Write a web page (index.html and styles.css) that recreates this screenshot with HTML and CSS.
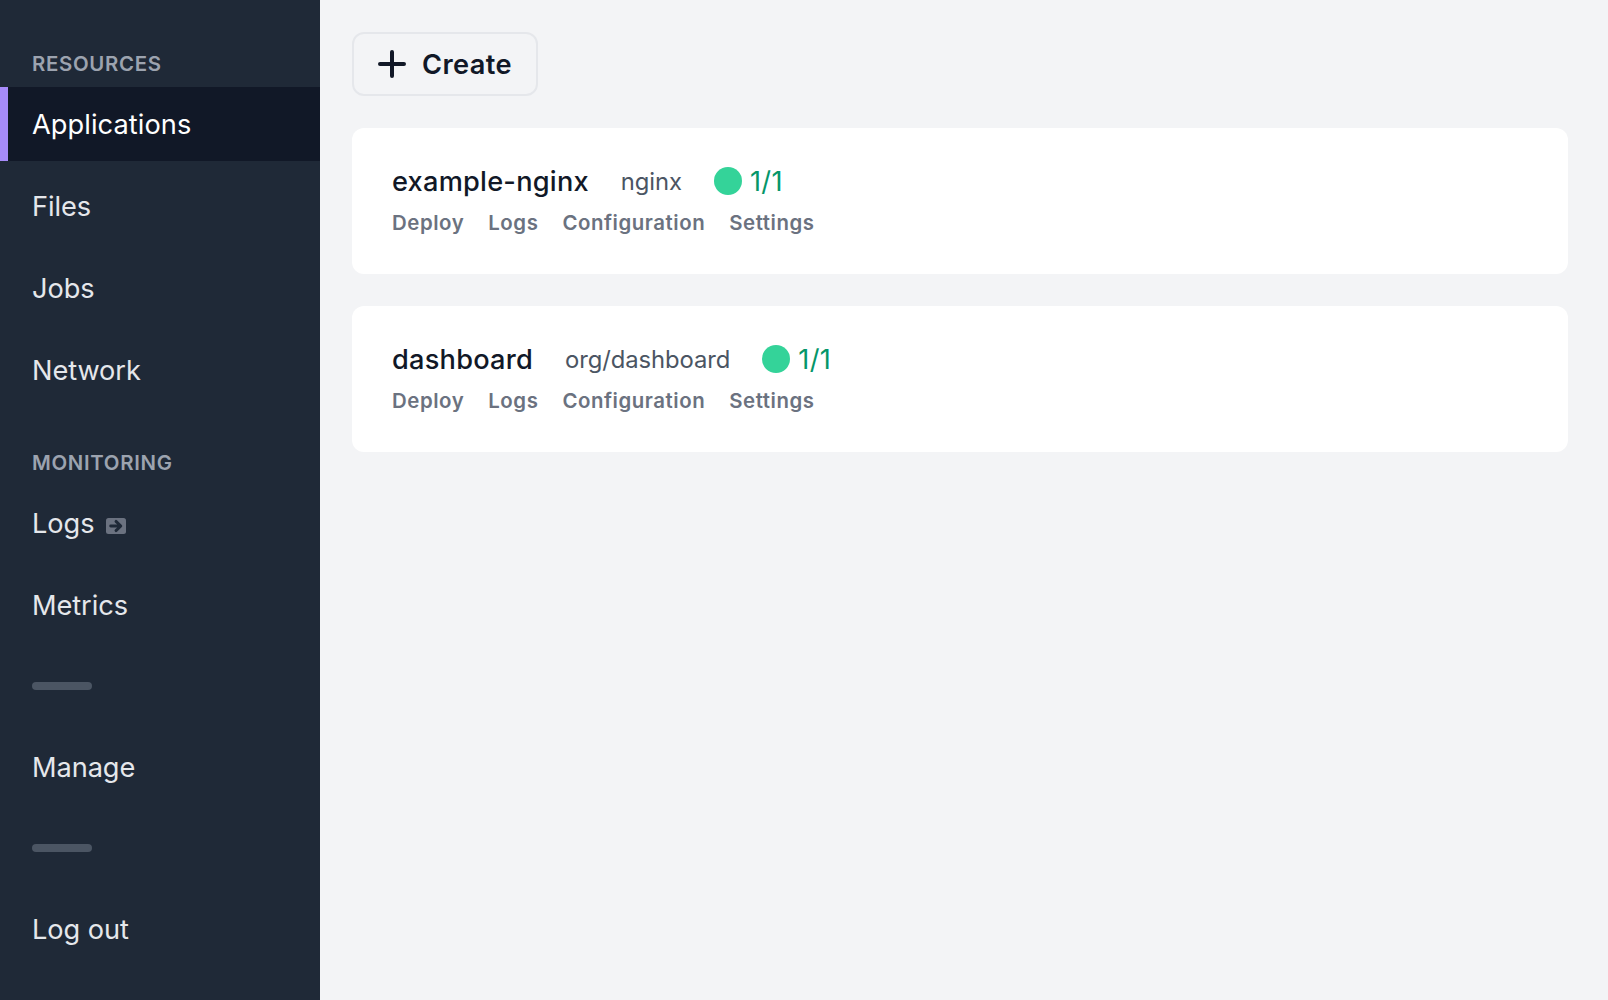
FILE: index.html
```html
<!DOCTYPE html>
<html lang="en">
<head>
<meta charset="utf-8">
<title>Applications</title>
<link rel="stylesheet" href="styles.css">
</head>
<body>
<div class="layout">
  <nav class="sidebar">
    <h2 class="heading">Resources</h2>
    <a class="item active">Applications</a>
    <a class="item">Files</a>
    <a class="item">Jobs</a>
    <a class="item">Network</a>
    <h2 class="heading">Monitoring</h2>
    <a class="item">Logs
      <svg class="external" viewBox="0 0 20 16"><rect width="20" height="16" rx="2.5" fill="#6b7280"/><path d="M4.7 8H14.6M10 3.4L14.8 8L10 12.6" fill="none" stroke="#1f2937" stroke-width="2.9" stroke-linecap="round" stroke-linejoin="round"/></svg>
    </a>
    <a class="item">Metrics</a>
    <hr class="divider">
    <a class="item">Manage</a>
    <hr class="divider">
    <a class="item">Log out</a>
  </nav>
  <main class="main">
    <button class="create">
      <svg class="plus" viewBox="0 0 28 28"><path d="M14 2V26M2 14H26" stroke="currentColor" stroke-width="4" stroke-linecap="round"/></svg>
      <span class="create-label">Create</span>
    </button>
    <section class="card">
      <div class="title-row">
        <span class="name">example-nginx</span>
        <span class="image">nginx</span>
        <span class="status"><i class="dot"></i><span class="count">1/1</span></span>
      </div>
      <div class="links"><a>Deploy</a><a>Logs</a><a>Configuration</a><a>Settings</a></div>
    </section>
    <section class="card">
      <div class="title-row">
        <span class="name">dashboard</span>
        <span class="image">org/dashboard</span>
        <span class="status"><i class="dot"></i><span class="count">1/1</span></span>
      </div>
      <div class="links"><a>Deploy</a><a>Logs</a><a>Configuration</a><a>Settings</a></div>
    </section>
  </main>
</div>
</body>
</html>
```
FILE: styles.css
```css
* { box-sizing: border-box; }
body {
  margin: 0;
  background: #f3f4f6;
  color: #111827;
  font-family: Inter, "Liberation Sans", sans-serif;
  font-size: 27.2px;
  line-height: 42px;
}
.layout { display: flex; height: 1000px; }
.sidebar {
  display: flex;
  flex-direction: column;
  flex: none;
  width: 320px;
  padding-top: 16px;
  background: #1f2937;
}
.heading {
  margin: 0;
  padding: 32px 32px 8px;
  color: #9ca3af;
  font-size: 20.4px;
  font-weight: 600;
  line-height: 31px;
  letter-spacing: 0.68px;
  text-transform: uppercase;
}
.item {
  display: flex;
  align-items: center;
  height: 74px;
  margin-bottom: 8px;
  padding: 1px 32px 0;
  color: #e5e7eb;
  letter-spacing: -0.07px;
}
.item.active {
  padding-left: 24px;
  border-left: 8px solid #a78bfa;
  background: #111827;
  color: #fff;
  letter-spacing: 0.07px;
}
.external { width: 20px; height: 16px; margin: 5px 0 0 12px; }
.divider {
  width: 60px;
  height: 8px;
  margin: 32px 0 40px 32px;
  border: 0;
  border-radius: 4px;
  background: #4b5563;
}
.main {
  display: flex;
  flex: 1;
  flex-direction: column;
  gap: 32px;
  padding: 32px 40px 32px 32px;
}
.create {
  display: flex;
  align-items: center;
  align-self: flex-start;
  gap: 16px;
  height: 64px;
  padding: 0 24px;
  border: 2px solid #e5e7eb;
  border-radius: 12px;
  background: transparent;
  color: inherit;
  font: inherit;
  font-weight: 600;
  letter-spacing: 0.4px;
}
.create-label { padding-top: 1px; }
.plus { width: 28px; height: 28px; }
.card {
  height: 146px;
  padding: 32px 40px 30px;
  border-radius: 12px;
  background: #fff;
}
.title-row { display: flex; align-items: center; gap: 32px; height: 42px; }
.name { padding-top: 1px; font-weight: 500; letter-spacing: 0.23px; }
.image { padding-top: 1px; color: #4b5563; font-size: 23.8px; letter-spacing: -0.07px; }
.status { display: flex; align-items: center; gap: 8px; color: #059669; }
.count { padding-top: 1px; letter-spacing: 0.3px; }
.dot { width: 28px; height: 28px; border-radius: 50%; background: #34d399; }
.links {
  display: flex;
  gap: 24px;
  color: #6b7280;
  font-size: 20.4px;
  font-weight: 600;
  letter-spacing: 0.56px;
}
```
